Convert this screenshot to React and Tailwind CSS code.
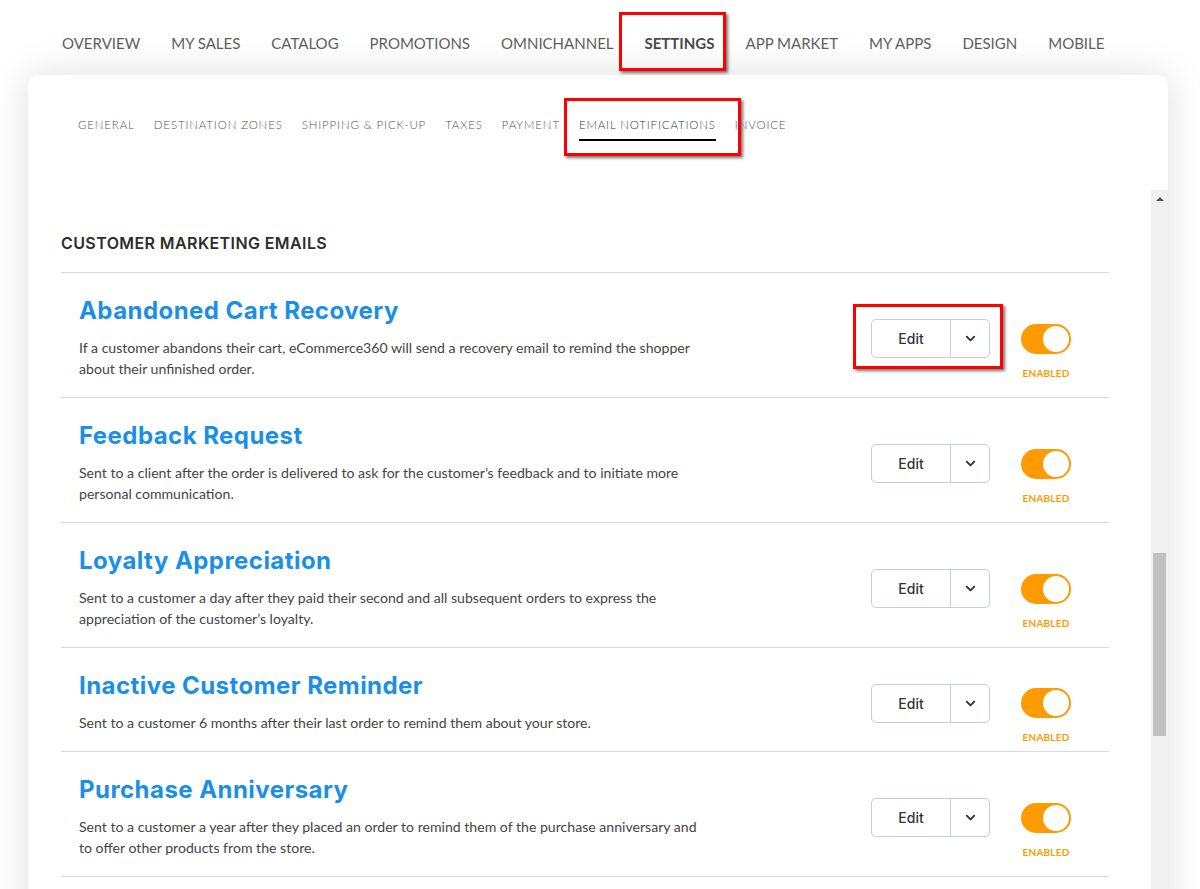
import { ChevronDown } from "lucide-react";

const NAV = ["OVERVIEW", "MY SALES", "CATALOG", "PROMOTIONS", "OMNICHANNEL", "SETTINGS", "APP MARKET", "MY APPS", "DESIGN", "MOBILE"];
const TABS = ["GENERAL", "DESTINATION ZONES", "SHIPPING & PICK-UP", "TAXES", "PAYMENT", "EMAIL NOTIFICATIONS", "INVOICE"];

const EMAILS = [
  {
    title: "Abandoned Cart Recovery",
    desc: "If a customer abandons their cart, eCommerce360 will send a recovery email to remind the shopper about their unfinished order.",
  },
  {
    title: "Feedback Request",
    desc: "Sent to a client after the order is delivered to ask for the customer’s feedback and to initiate more personal communication.",
  },
  {
    title: "Loyalty Appreciation",
    desc: "Sent to a customer a day after they paid their second and all subsequent orders to express the appreciation of the customer’s loyalty.",
  },
  {
    title: "Inactive Customer Reminder",
    desc: "Sent to a customer 6 months after their last order to remind them about your store.",
  },
  {
    title: "Purchase Anniversary",
    desc: "Sent to a customer a year after they placed an order to remind them of the purchase anniversary and to offer other products from the store.",
  },
];

const lato = "font-['Lato','Open_Sans',sans-serif]";
const inter = "font-['Inter','Noto_Sans',sans-serif]";

export default function App() {
  return (
    <div className={`relative w-[1200px] h-[889px] overflow-hidden bg-white ${lato}`}>
      {/* top nav */}
      <nav className="h-[75px] flex items-center gap-[31px] pl-[62px] pt-[12px] text-[15px] text-[#5e5e5e]">
        {NAV.map((n) => (
          <span key={n} className={n === "SETTINGS" ? "font-bold text-[#4a4a4a]" : ""}>
            {n}
          </span>
        ))}
      </nav>

      {/* card */}
      <div className="ml-[28px] w-[1140px] h-[860px] rounded-[10px] bg-white shadow-[0_0_40px_rgba(0,0,0,0.13)] flex flex-col">
        <div className="h-[115px] flex items-start gap-[19px] pl-[50px] pt-[41px] text-[11.5px] tracking-[0.85px] font-light text-[#555]">
          {TABS.map((t) =>
            t === "EMAIL NOTIFICATIONS" ? (
              <span key={t} className="text-[#3a3a3a] border-b-2 border-black pb-[6px]">
                {t}
              </span>
            ) : (
              <span key={t}>{t}</span>
            )
          )}
        </div>

        <div className="flex-1 flex">
          <div className="flex-1 pl-[33px] pr-[42px] pt-[44px]">
            <h2 className={`${inter} font-semibold text-[16px] leading-[18px] text-[#2d2d2d] pb-[20px] border-b border-[#d5dae1] tracking-[0.4px]`}>
              CUSTOMER MARKETING EMAILS
            </h2>
            {EMAILS.map((e) => (
              <div key={e.title} className="flex items-center border-b border-[#d5dae1] pl-[18px] pt-[23px] pb-[18px]">
                <div className="flex-1">
                  <div className={`${inter} font-bold text-[24px] leading-[30px] tracking-[0.45px] text-[#1b8fe6]`}>{e.title}</div>
                  <p className="mt-[11px] max-w-[626px] text-[14.1px] leading-[21px] text-[#444]">{e.desc}</p>
                </div>
                <div className="flex items-center mt-[2px] mr-[38px]">
                  <div className={`flex h-[39px] w-[119px] rounded-[5px] border border-[#c6ced9] bg-white ${inter} text-[14px] text-[#333]`}>
                    <span className="w-[79px] flex items-center justify-center border-r border-[#c6ced9] font-medium">Edit</span>
                    <span className="flex-1 flex items-center justify-center">
                      <ChevronDown size={15} strokeWidth={3} />
                    </span>
                  </div>
                  <div className="relative ml-[31px]">
                    <div className="w-[50px] h-[30px] rounded-full bg-[#ff9a00] flex items-center justify-end pr-[2px]">
                      <span className="w-[26px] h-[26px] rounded-full bg-white" />
                    </div>
                    <span className="absolute left-1/2 -translate-x-1/2 top-[43px] text-[10px] leading-[12px] font-bold text-[#ff9a00] tracking-[0.2px]">
                      ENABLED
                    </span>
                  </div>
                </div>
              </div>
            ))}
          </div>

          {/* scrollbar */}
          <div className="w-[17px] bg-[#f1f1f1] flex flex-col items-center">
            <div className="h-[17px] flex items-center justify-center">
              <span className="w-0 h-0 border-l-[4px] border-r-[4px] border-b-[4px] border-l-transparent border-r-transparent border-b-[#505050]" />
            </div>
            <div className="mt-[346px] w-[13px] h-[183px] bg-[#c1c1c1]" />
          </div>
        </div>
      </div>

      {/* red annotation boxes */}
      <div className="absolute left-[619px] top-[12px] w-[107px] h-[59px] border-[3px] border-[#ff0000] shadow-[2px_2px_3px_rgba(0,0,0,0.55)]" />
      <div className="absolute left-[564px] top-[98px] w-[177px] h-[58px] border-[3px] border-[#ff0000] shadow-[2px_2px_3px_rgba(0,0,0,0.55)]" />
      <div className="absolute left-[853px] top-[304px] w-[150px] h-[65px] border-[3px] border-[#ff0000] shadow-[2px_2px_3px_rgba(0,0,0,0.55)]" />
    </div>
  );
}
